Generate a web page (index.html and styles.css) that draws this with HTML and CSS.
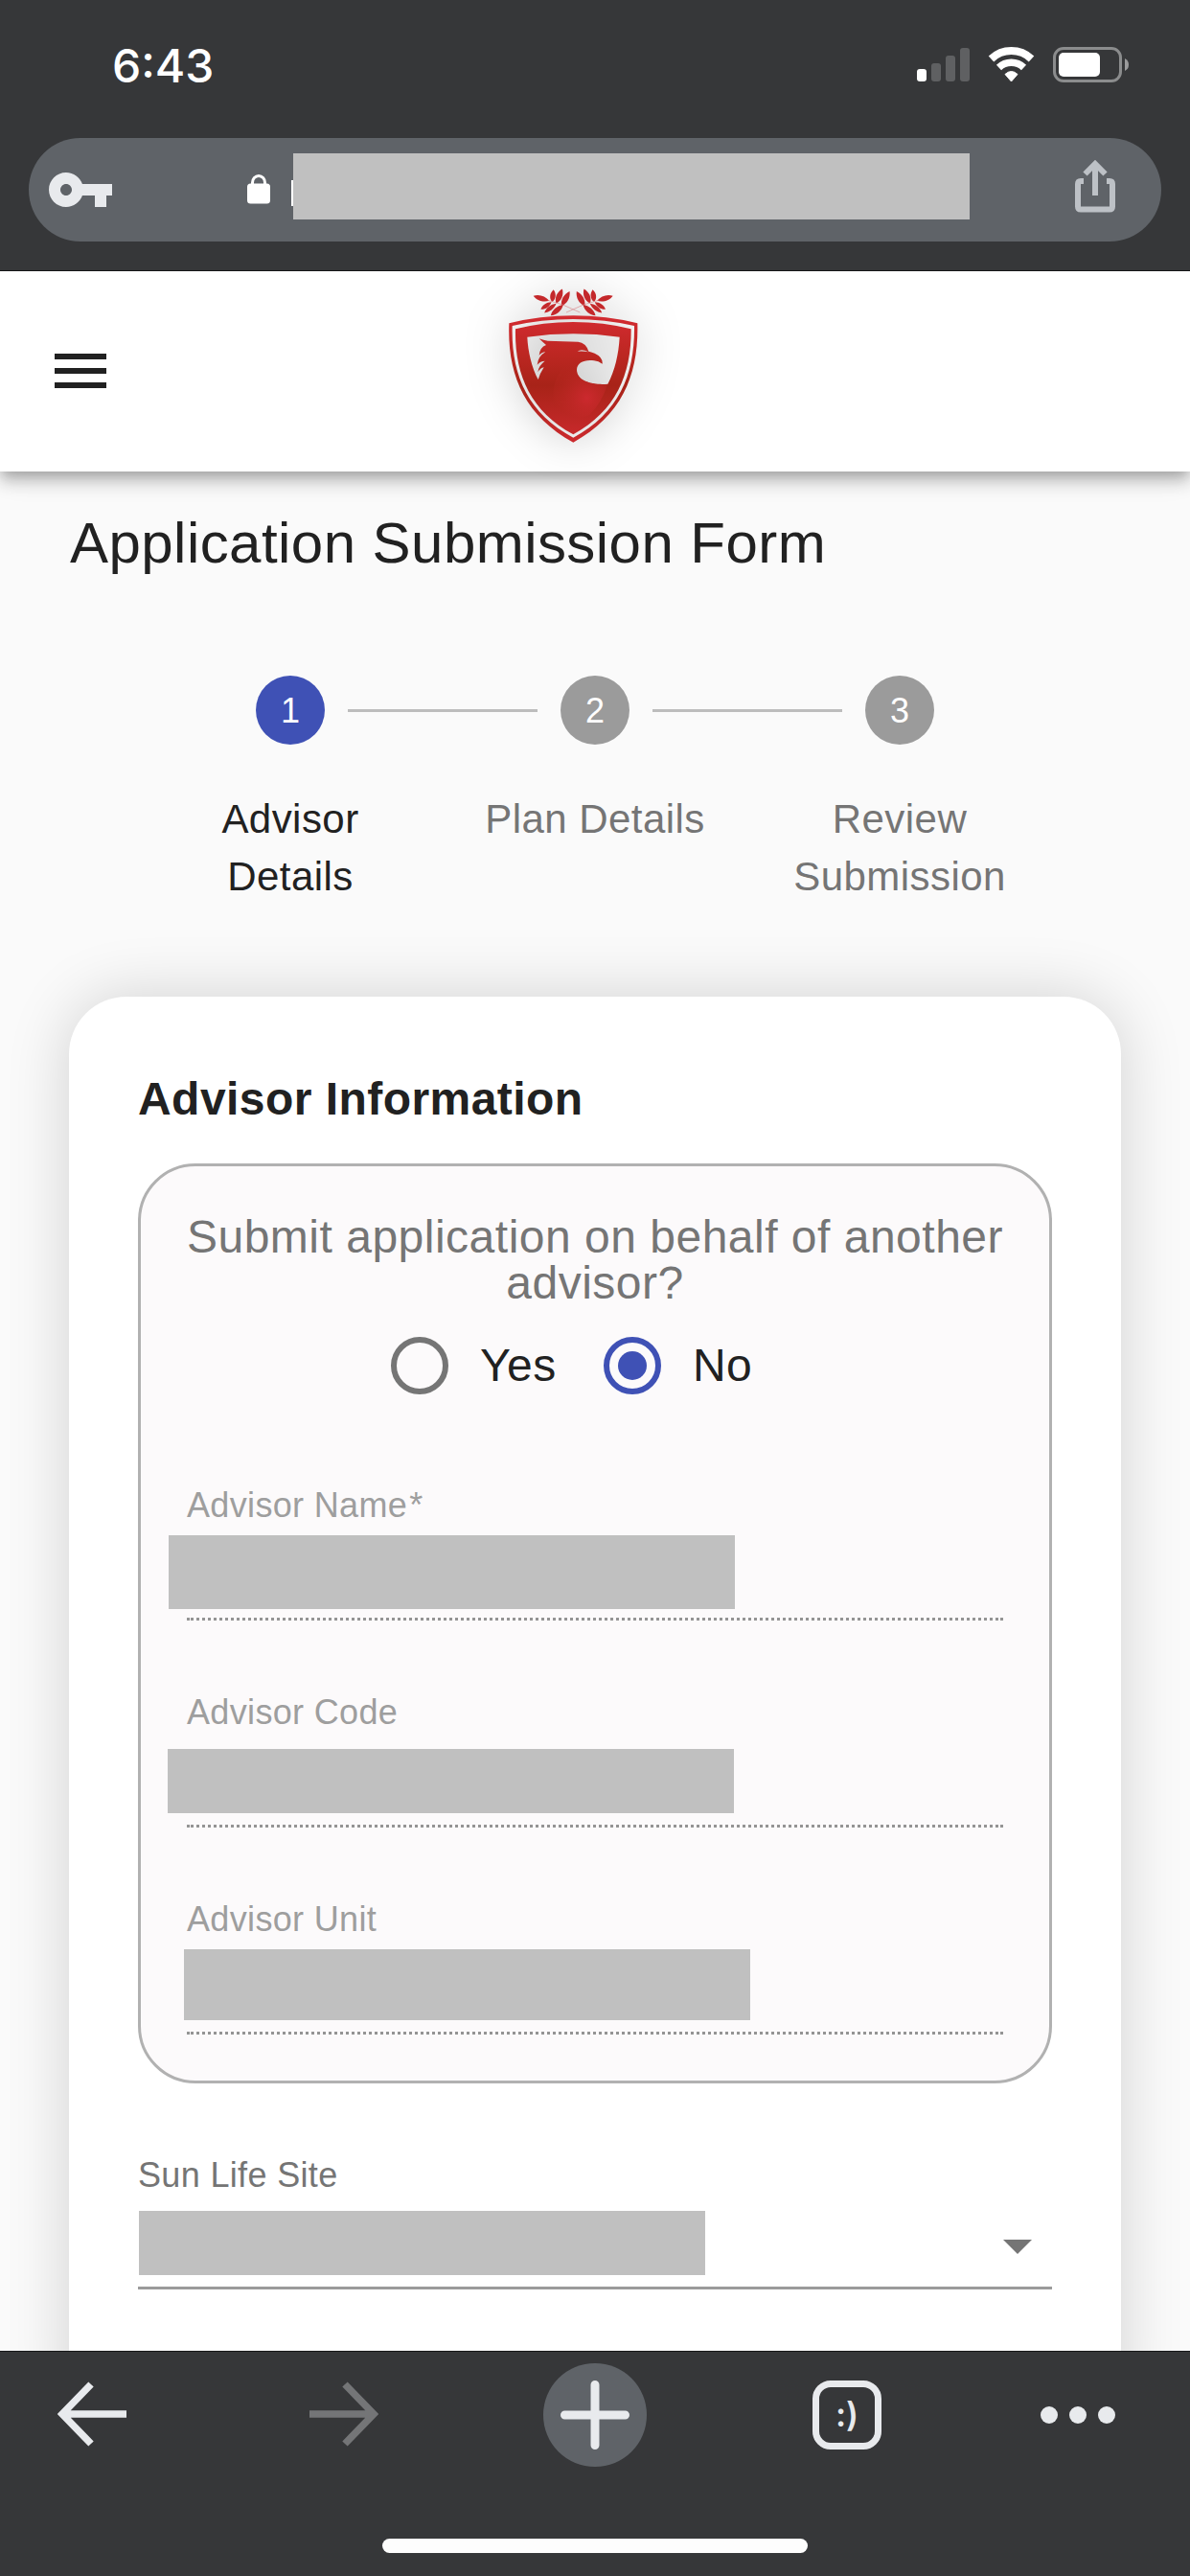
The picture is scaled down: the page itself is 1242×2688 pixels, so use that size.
FILE: index.html
```html
<!DOCTYPE html>
<html lang="en">
<head>
<meta charset="utf-8">
<title>Application Submission Form</title>
<link rel="stylesheet" href="styles.css">
</head>
<body>
<div class="browser-top">
  <div class="status">
    <span class="time">6:43</span>
    <svg class="status-icons" width="222" height="40" viewBox="957 48 222 40">
      <g fill="#5f6062"><rect x="972" y="66" width="10" height="19" rx="3"/><rect x="987" y="58" width="10" height="27" rx="3"/><rect x="1002" y="50" width="10" height="35" rx="3"/></g>
      <rect x="957" y="72" width="10" height="13" rx="3" fill="#fff"/>
      <g fill="none" stroke="#fff" stroke-width="8">
        <path d="M1034.5 61.5A30.5 30.5 0 0 1 1076.500 61.500"/>
        <path d="M1042.500 70.500A19 19 0 0 1 1068.500 70.500" stroke-width="7.500"/>
      </g>
      <path d="M1055.500 85L1049 77.500Q1055.500 71.500 1062 77.500Z" fill="#fff" stroke="#fff" stroke-width="1"/>
      <rect x="1100.500" y="50.500" width="69" height="34" rx="9.500" fill="none" stroke="#8b8c8d" stroke-width="3"/>
      <rect x="1105" y="55" width="43" height="25" rx="5" fill="#fff"/>
      <path d="M1174 61Q1178 63 1178 67.500T1174 74Z" fill="#9b9b9c"/>
    </svg>
  </div>
  <div class="address">
    <svg class="key" width="72" height="72" viewBox="0 0 24 24"><path fill="#e8eaed" d="M12.650 10C11.830 7.670 9.610 6 7 6c-3.310 0-6 2.690-6 6s2.690 6 6 6c2.610 0 4.830-1.670 5.650-4H17v4h4v-4h2v-4H12.650zM7 14c-1.100 0-2-.9-2-2s.9-2 2-2 2 .9 2 2-.9 2-2 2z"/></svg>
    <svg class="lock" width="24" height="32" viewBox="0 0 24 32"><rect y="10.500" width="24" height="21" rx="3.500" fill="#fff"/><path d="M5.500 12V9.500a6.500 7 0 0 1 13 0V12" fill="none" stroke="#fff" stroke-width="3"/></svg>
    <span class="caret"></span>
    <span class="url"></span>
    <svg class="share" width="42" height="55" viewBox="0 0 42 55"><g fill="none" stroke="#bdc1c6" stroke-width="6"><path d="M9 22H6Q3 22 3 25V48.500Q3 51.500 6 51.500H36Q39 51.500 39 48.500V25Q39 22 36 22H33"/><path d="M21 37V5M10.500 14.500L21 4L31.500 14.500"/></g></svg>
  </div>
</div>

<header class="appbar">
  <svg class="menu" width="54" height="36" viewBox="0 0 54 36"><path fill="#212121" d="M0 0h54v6H0zM0 15h54v6H0zM0 30h54v6H0z"/></svg>
  <svg class="logo" width="200" height="200" viewBox="0 9 600 600">
    <defs>
      <linearGradient id="red" x1="0" y1="0" x2="0" y2="1"><stop offset="0" stop-color="#d32b31"/><stop offset=".3" stop-color="#bd2722"/><stop offset=".55" stop-color="#a82318"/><stop offset="1" stop-color="#cc2a2e"/></linearGradient>
      <radialGradient id="chest" cx=".62" cy=".65" r=".6"><stop offset="0" stop-color="#cc292e"/><stop offset="1" stop-color="#b5261f" stop-opacity=".4"/></radialGradient>
      <path id="leaf" d="M-26 0C-12-11 10-11 26 0C10 11-12 11-26 0Z"/>
      <g id="branch">
        <use href="#leaf" transform="translate(195 94) rotate(17)"/>
        <use href="#leaf" transform="translate(231 86) rotate(-83) scale(.75 1)"/>
        <use href="#leaf" transform="translate(251 87) rotate(-67) scale(.95 1.100)"/>
        <use href="#leaf" transform="translate(271 95) rotate(-61) scale(1 1.100)"/>
        <use href="#leaf" transform="translate(210 117) rotate(-34) scale(.78 .8)"/>
        <use href="#leaf" transform="translate(223 125) rotate(-38) scale(.9 .8)"/>
        <use href="#leaf" transform="translate(244 131) rotate(-41)"/>
        <path d="M215 100L262 114L316 138" fill="none" stroke="#d98a8c" stroke-width="2"/>
      </g>
    </defs>
    <g fill="#c4282b"><use href="#branch"/><use href="#branch" transform="translate(589 0) scale(-1 1)"/></g>
    <path fill="url(#red)" fill-rule="evenodd" d="M94 172Q190 148 295 148Q400 148 496 172C500 330 450 460 295 545C140 460 88 330 94 172Z
      M104 180Q195 159 295 159Q395 159 486 180C488 330 440 452 295 530C150 452 100 330 104 180Z
      M114 190Q200 168 295 168Q390 168 476 190C477 330 431 445 295 520C159 445 111 330 114 190Z
      M151 215Q295 195 440 215C437 270 425 320 403 362C360 366 306 355 306 318C306 295 330 285 360 289Q374 290 386 299Q388 278 362 266Q350 261 343 260Q335 233 310 230L215 227Q203 226 188 220Q198 230 210 240Q190 247 188 273Q196 262 208 262Q185 275 182 302Q192 290 206 290Q186 305 184 325Q192 312 203 310Q190 330 185 348C165 310 153 260 151 215Z"/>
    <path fill="url(#chest)" d="M306 290C250 300 220 370 238 430Q290 485 345 460Q385 420 402 363C360 366 306 355 306 318Z"/>
    <path fill="#dcd5d5" d="M308 260Q320 250 343 262Q325 258 308 260Z"/>
  </svg>
</header>

<main class="page">
  <h1 class="title">Application Submission Form</h1>
  <ol class="stepper">
    <li class="step active"><div class="step-head"><span class="dot">1</span></div><span class="step-label">Advisor Details</span></li>
    <li class="step"><div class="step-head"><span class="dot">2</span></div><span class="step-label">Plan Details</span></li>
    <li class="step"><div class="step-head"><span class="dot">3</span></div><span class="step-label">Review Submission</span></li>
  </ol>
  <section class="card">
    <h2 class="card-title">Advisor Information</h2>
    <div class="panel">
      <p class="question">Submit application on behalf of another<br>advisor?</p>
      <div class="radios">
        <label class="radio"><span class="ring"></span>Yes</label>
        <label class="radio checked"><span class="ring"></span>No</label>
      </div>
      <div class="field"><span class="label">Advisor Name<span class="required">*</span></span><span class="value name"></span></div>
      <div class="field"><span class="label">Advisor Code</span><span class="value code"></span></div>
      <div class="field"><span class="label">Advisor Unit</span><span class="value unit"></span></div>
    </div>
    <div class="select">
      <span class="label">Sun Life Site</span>
      <div class="select-row"><span class="value site"></span><svg width="30" height="15" viewBox="0 0 30 15"><path d="M0 0H30L15 15Z" fill="#757575"/></svg></div>
    </div>
  </section>
</main>

<footer class="browser-bottom">
  <nav class="tools">
    <svg class="back" width="72" height="68" viewBox="0 0 72 68"><path d="M72 34H7M35 3L5 34L35 65" fill="none" stroke="#e8eaed" stroke-width="7.500"/></svg>
    <svg class="forward" width="72" height="68" viewBox="0 0 72 68"><path d="M0 34H65M37 3L67 34L37 65" fill="none" stroke="#747577" stroke-width="7.500"/></svg>
    <span class="new-tab"><svg width="72" height="72" viewBox="0 0 72 72"><path d="M36 4.500V67.500M4.500 36H67.500" fill="none" stroke="#e8eaed" stroke-width="9" stroke-linecap="round"/></svg></span>
    <span class="tabs">:)</span>
    <svg class="more" width="78" height="18" viewBox="0 0 78 18" fill="#e8eaed"><circle cx="9" cy="9" r="9"/><circle cx="39" cy="9" r="9"/><circle cx="69" cy="9" r="9"/></svg>
  </nav>
  <div class="home"></div>
</footer>
</body>
</html>
```
FILE: styles.css
```css
* { box-sizing: border-box; }
body {
  margin: 0;
  width: 1242px;
  height: 2688px;
  overflow: hidden;
  display: flex;
  flex-direction: column;
  background: #fafafa;
  color: #212121;
  font-family: "Liberation Sans", Arial, sans-serif;
}
svg { display: block; flex: none; }

/* Browser chrome, top */
.browser-top {
  flex: none;
  height: 283px;
  background: #363739;
  border-bottom: 1px solid #161718;
  position: relative;
  z-index: 3;
}
.status {
  height: 144px;
  padding: 48px 63px 0 117px;
  display: flex;
  justify-content: space-between;
}
.time {
  color: #fff;
  font: 500 48px/41px Inter, sans-serif;
}
.address {
  height: 108px;
  margin: 0 30px;
  padding-left: 18px;
  border-radius: 54px;
  background: #5f6368;
  display: flex;
  align-items: center;
}
.lock { margin-left: 138px; margin-bottom: 3px; }
.caret { width: 2px; height: 27px; margin: 6px 0 0 22px; background: #fff; }
.url { width: 706px; height: 69px; margin-top: -7px; background: #c0c0c0; }
.share { margin: -8px 0 0 110px; }

/* App bar */
.appbar {
  flex: none;
  height: 209px;
  padding-left: 57px;
  background: #fff;
  display: flex;
  position: relative;
  z-index: 2;
  box-shadow: 0 6px 12px -3px rgba(0,0,0,.2), 0 12px 15px 0 rgba(0,0,0,.14), 0 3px 30px 0 rgba(0,0,0,.12);
}
.menu { margin-top: 86px; }
.logo { margin-left: 389px; overflow: visible; filter: drop-shadow(0 0 24px rgba(0,0,0,.22)); }

/* Page */
.page {
  flex: none;
  height: 1961px;
  padding: 39px 72px 0;
  overflow: hidden;
}
.title {
  margin: 0;
  padding-left: 1px;
  font-size: 60px;
  line-height: 72px;
  font-weight: 400;
  letter-spacing: .45px;
}
.stepper {
  list-style: none;
  margin: 102px 72px 0;
  padding: 0;
  height: 240px;
  display: grid;
  grid-template-columns: repeat(3, 318px);
}
.step { color: #757575; text-align: center; }
.step.active { color: #212121; }
.step-head { display: flex; align-items: center; gap: 24px; }
.step-head::before, .step-head::after { content: ""; flex: 1; height: 3px; background: #bdbdbd; }
.step:first-child .step-head::before, .step:last-child .step-head::after { background: none; }
.dot {
  width: 72px;
  height: 72px;
  border-radius: 50%;
  background: #9b9b9b;
  color: #fff;
  font-size: 36px;
  line-height: 73px;
}
.active .dot { background: #3f51b5; }
.step-label {
  display: block;
  padding: 48px 24px 0;
  font-size: 42px;
  line-height: 60px;
  letter-spacing: .45px;
}

/* Card */
.card {
  height: 1500px;
  margin-top: 95px;
  padding: 83px 72px 0;
  border-radius: 60px;
  background: #fff;
  box-shadow: 0 0 66px rgba(0,0,0,.165);
}
.card-title { margin: 0 0 43px; font-size: 48px; line-height: 48px; letter-spacing: .45px; }
.panel {
  height: 960px;
  padding: 50px 48px 0;
  border: 3px solid #b1b1b1;
  border-radius: 60px;
  background: #fcfafb;
}
.question {
  margin: 0 -10px;
  color: #757575;
  font-size: 48px;
  line-height: 48px;
  letter-spacing: .5px;
  text-align: center;
  white-space: nowrap;
}
.radios { height: 112px; padding: 32px 0 0 213px; display: flex; }
.radio { width: 222px; height: 60px; display: flex; align-items: center; gap: 33px; font-size: 48px; line-height: 48px; letter-spacing: .45px; }
.ring { width: 60px; height: 60px; padding: 9px; border: 6px solid #757575; border-radius: 50%; }
.checked .ring { border-color: #3f51b5; background: #3f51b5 content-box; }
.label { display: block; font-size: 36px; line-height: 42px; letter-spacing: .34px; }
.required { margin-left: 2px; }
.field {
  height: 216px;
  padding-top: 75px;
  color: #9e9e9e;
  background:
    linear-gradient(#949494, #949494) bottom left / 3px 3px no-repeat,
    linear-gradient(#949494, #949494) bottom right / 3px 3px no-repeat,
    repeating-linear-gradient(90deg, transparent 0 4px, #949494 4px 7px, transparent 7px 10px, #949494 10px 13px, transparent 13px 14px, transparent 14px 16px) bottom left / 6px 3px no-repeat,
    repeating-linear-gradient(90deg, transparent 0 1px, #949494 1px 4px, transparent 4px 6px) 3px 100% / 100% 3px no-repeat;
}
.value { display: block; width: 591px; background: #c0c0c0; }
.name { height: 77px; margin: 10px 0 0 -19px; }
.code { height: 67px; margin: 17px 0 0 -20px; }
.unit { height: 74px; margin: 10px 0 0 -3px; }
.select { margin-top: 75px; color: #757575; }
.select-row {
  height: 98px;
  padding: 16px 21px 0 1px;
  display: flex;
  justify-content: space-between;
  border-bottom: 3px solid #9b9b9b;
}
.site { height: 67px; }
.select-row svg { margin-top: 30px; }

/* Browser chrome, bottom */
.browser-bottom {
  flex: none;
  height: 235px;
  background: #363739;
  border-top: 1px solid #161718;
}
.tools {
  height: 195px;
  display: flex;
  align-items: flex-start;
}
.back { margin: 31px 0 0 60px; }
.forward { margin: 31px 0 0 191px; }
.new-tab {
  width: 108px;
  height: 108px;
  margin: 12px 0 0 172px;
  padding: 18px;
  border-radius: 50%;
  background: #5f6368;
}
.tabs {
  width: 72px;
  height: 72px;
  margin: 30px 0 0 173px;
  border: 7.500px solid #e8eaed;
  border-radius: 19px;
  color: #e8eaed;
  font: 600 35px/57px Inter, sans-serif;
  text-align: center;
}
.more { margin: 57px 0 0 166px; }
.home { width: 444px; height: 15px; margin: 0 auto; border-radius: 8px; background: #fdfdfd; }
```
